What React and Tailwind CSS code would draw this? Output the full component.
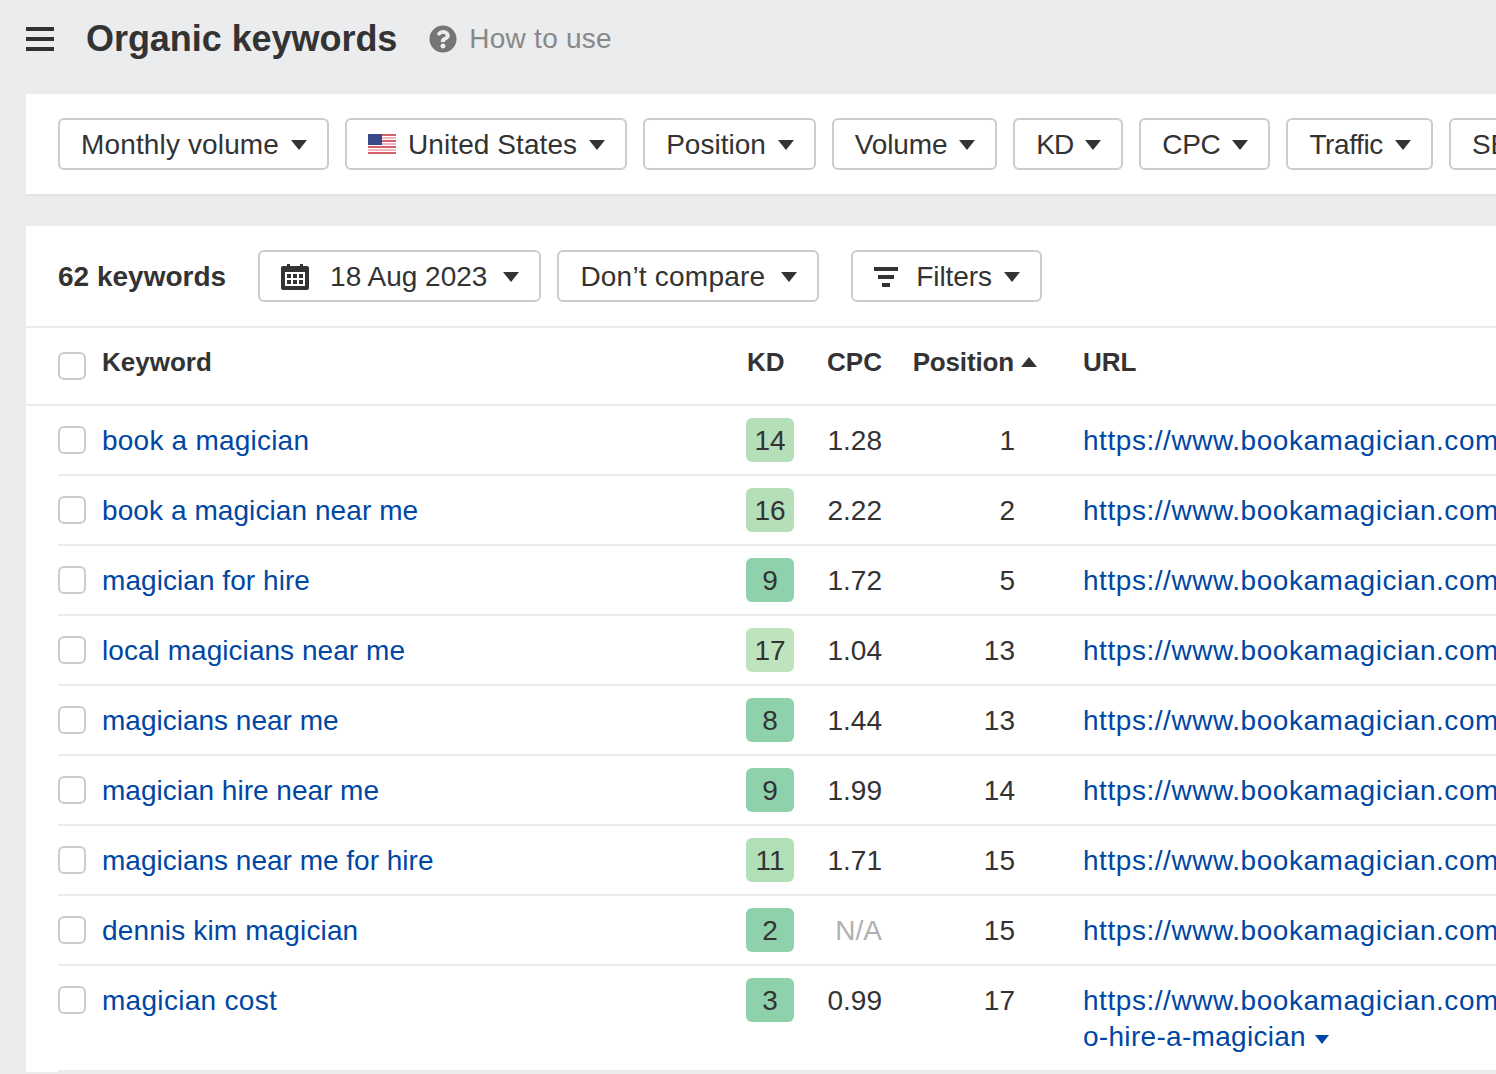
import React from "react";
import { FaQuestionCircle } from "react-icons/fa";

const rows = [
  { keyword: "book a magician", kd: 14, kdColor: "bg-[#b5dfb9]", cpc: "1.28", position: 1, spacing: "tracking-[0.22px]" },
  { keyword: "book a magician near me", kd: 16, kdColor: "bg-[#b5dfb9]", cpc: "2.22", position: 2, spacing: "tracking-[0.08px]" },
  { keyword: "magician for hire", kd: 9, kdColor: "bg-[#8ed1ab]", cpc: "1.72", position: 5, spacing: "tracking-[0.06px]" },
  { keyword: "local magicians near me", kd: 17, kdColor: "bg-[#bfe3bd]", cpc: "1.04", position: 13, spacing: "tracking-[0.05px]" },
  { keyword: "magicians near me", kd: 8, kdColor: "bg-[#8ed1ab]", cpc: "1.44", position: 13, spacing: "" },
  { keyword: "magician hire near me", kd: 9, kdColor: "bg-[#8ed1ab]", cpc: "1.99", position: 14, spacing: "" },
  { keyword: "magicians near me for hire", kd: 11, kdColor: "bg-[#b0dfb8]", cpc: "1.71", position: 15, spacing: "" },
  { keyword: "dennis kim magician", kd: 2, kdColor: "bg-[#8ed1ab]", cpc: "N/A", position: 15, spacing: "tracking-[0.14px]" },
  { keyword: "magician cost", kd: 3, kdColor: "bg-[#8ed1ab]", cpc: "0.99", position: 17, spacing: "tracking-[0.3px]", more: "o-hire-a-magician" },
];

function Caret({ up }) {
  return (
    <svg viewBox="0 0 16 10" className="w-4 h-[10px] shrink-0 fill-current">
      <path d={up ? "M8 0l8 10H0z" : "M0 0h16L8 10z"} />
    </svg>
  );
}

function Flag() {
  return (
    <svg viewBox="0 0 28 21" className="w-7 h-[21px] shrink-0">
      <rect width="28" height="21" fill="#fff" />
      <path d="M14 1h14M14 7h14M0 13h28M0 19h28" stroke="#d9606a" strokeWidth="2" />
      <path d="M14 4h14M14 10h14M0 16h28" stroke="#eda3a8" strokeWidth="1.500" />
      <rect width="14" height="11" fill="#3a4a88" />
    </svg>
  );
}

function CalendarIcon() {
  return (
    <svg viewBox="0 0 28 26" className="w-7 h-[26px] shrink-0">
      <path d="M0 4a2 2 0 0 1 2-2h4V0h3v2h10V0h3v2h4a2 2 0 0 1 2 2v20a2 2 0 0 1-2 2H2a2 2 0 0 1-2-2z" fill="#333" />
      <rect x="4" y="8" width="20" height="14" fill="#fff" />
      <path d="M6 10h4v4H6zM12 10h4v4h-4zM18 10h4v4h-4zM6 16h4v4H6zM12 16h4v4h-4zM18 16h4v4h-4z" fill="#333" />
    </svg>
  );
}

function FilterIcon() {
  return (
    <svg viewBox="0 0 24 20" className="w-6 h-5 shrink-0 fill-[#333]">
      <path d="M0 0h24v4H0zM4 8h16v4H4zM8 16h8v4H8z" />
    </svg>
  );
}

function DropButton({ children, gap = "gap-3" }) {
  return (
    <div className={`flex items-center ${gap} h-[52px] pl-[21px] pr-5 pt-px shrink-0 bg-white border-2 border-[#ccc] rounded-md whitespace-nowrap`}>
      {children}
    </div>
  );
}

function Checkbox() {
  return <div className="w-7 h-7 shrink-0 bg-white border-2 border-[#ccc] rounded-md" />;
}

export default function App() {
  return (
    <div
      className="w-[1496px] h-[1074px] overflow-hidden bg-[#ebecee] text-[28px] text-[#333]"
      style={{ fontFamily: '"Liberation Sans", Arial, sans-serif' }}
    >
      {/* Page title */}
      <div className="h-[94px] pb-[16px] pl-[26px] flex items-center">
        <div className="flex flex-col gap-[6px] w-7 mr-8">
          <div className="h-1 bg-[#333]" />
          <div className="h-1 bg-[#333]" />
          <div className="h-1 bg-[#333]" />
        </div>
        <div className="text-[36px] font-bold whitespace-nowrap tracking-[-0.05px]">Organic keywords</div>
        <FaQuestionCircle className="w-7 h-7 ml-8 mr-3 text-[#757575]" />
        <div className="text-[#888] tracking-[0.25px]">How to use</div>
      </div>

      <div className="ml-[26px]">
        {/* Top filters */}
        <div className="h-[102px] bg-white border-b-2 border-[#e3e4e6] flex items-center gap-4 pl-8">
          <DropButton>
            <span className="tracking-[0.14px]">Monthly volume</span>
            <Caret />
          </DropButton>
          <DropButton>
            <Flag />
            <span className="tracking-[0.08px]">United States</span>
            <Caret />
          </DropButton>
          <DropButton>
            Position
            <Caret />
          </DropButton>
          <DropButton>
            <span className="tracking-[-0.15px]">Volume</span>
            <Caret />
          </DropButton>
          <DropButton>
            <span className="tracking-[-1px]">KD</span>
            <Caret />
          </DropButton>
          <DropButton>
            <span className="tracking-[-0.3px]">CPC</span>
            <Caret />
          </DropButton>
          <DropButton>
            <span className="tracking-[-0.4px]">Traffic</span>
            <Caret />
          </DropButton>
          <DropButton>
            SERP features
            <Caret />
          </DropButton>
        </div>

        <div className="mt-[30px] bg-white">
          {/* Toolbar */}
          <div className="h-[102px] border-b-2 border-[#eaeaea] flex items-center pl-8">
            <div className="font-bold whitespace-nowrap mr-8 pt-[2px]">62 keywords</div>
            <DropButton gap="gap-4">
              <div className="mr-[5px]">
                <CalendarIcon />
              </div>
              18 Aug 2023
              <Caret />
            </DropButton>
            <div className="ml-4">
              <DropButton gap="gap-4">
                <span className="tracking-[0.22px]">Don’t compare</span>
                <Caret />
              </DropButton>
            </div>
            <div className="ml-8">
              <DropButton>
                <div className="mr-1.5">
                  <FilterIcon />
                </div>
                <span className="tracking-[-0.1px]">Filters</span>
                <Caret />
              </DropButton>
            </div>
          </div>

          {/* Table header */}
          <div className="h-[78px] pb-[8px] border-b-2 border-[#eaeaea] flex items-center pl-8 font-bold text-[26px]">
            <div className="w-11 shrink-0 pt-[8px]">
              <Checkbox />
            </div>
            <div className="w-[644px] shrink-0">Keyword</div>
            <div className="w-20 shrink-0 pl-px">KD</div>
            <div className="w-14 shrink-0 text-right">CPC</div>
            <div className="w-[155px] shrink-0 flex items-center justify-end gap-[7px]">
              <span className="tracking-[-0.15px]">Position</span>
              <Caret up />
            </div>
            <div className="ml-[46px]">URL</div>
          </div>

          {/* Rows */}
          <div className="ml-8">
            {rows.map((row) => (
              <div
                key={row.keyword}
                className={`flex items-start border-b-2 border-[#eaeaea] ${row.more ? "h-[106px]" : "h-[70px]"}`}
              >
                <div className="w-11 shrink-0 pt-[20px]">
                  <Checkbox />
                </div>
                <div className={`w-[644px] shrink-0 pt-[17px] leading-9 text-[#0047a3] ${row.spacing}`}>{row.keyword}</div>
                <div className="w-20 shrink-0 pt-[12px]">
                  <div className={`w-12 h-11 pt-px rounded-md flex items-center justify-center ${row.kdColor}`}>{row.kd}</div>
                </div>
                <div className={`w-14 shrink-0 pt-[17px] leading-9 text-right ${row.cpc === "N/A" ? "text-[#b0b0b0]" : ""}`}>
                  {row.cpc}
                </div>
                <div className="w-[155px] shrink-0 pt-[17px] pr-[22px] leading-9 text-right">{row.position}</div>
                <div className="ml-[46px] w-[500px] shrink-0 pt-[17px] leading-9 text-[#0047a3] whitespace-nowrap">
                  <div className="tracking-[0.55px]">https://www.bookamagician.com/</div>
                  {row.more && (
                    <div className="flex items-center gap-[9px]">
                      <span className="tracking-[0.3px]">{row.more}</span>
                      <svg viewBox="0 0 14 9" className="w-[14px] h-[9px] mt-1 shrink-0 fill-current">
                        <path d="M0 0h14L7 9z" />
                      </svg>
                    </div>
                  )}
                </div>
              </div>
            ))}
          </div>
        </div>
      </div>
    </div>
  );
}
